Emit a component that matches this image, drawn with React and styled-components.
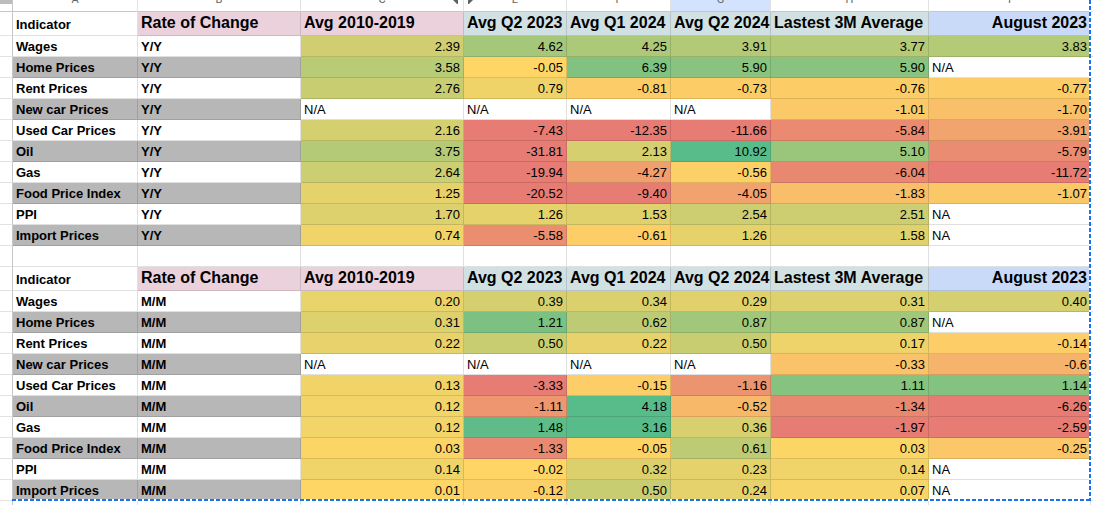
import React from "react";
import styled, { createGlobalStyle } from "styled-components";

const COLS = "13px 125px 163px 163px 103px 104px 100px 158px 162px 1fr";
const GRID = "rgba(0, 0, 0, 0.12)";
const GRAY = "#b7b7b7";
const PINK = "#ead1dc";
const TEAL = "#d0e0e3";
const BLUE = "#c9daf8";

const YELLOW = [255, 214, 102];
const RED = [230, 124, 115];
const GREEN = [87, 187, 138];

// sheets style 3-point colour scale, midpoint at 0
const scaleColor = (v, neg, pos) => {
    const t = v < 0 ? Math.max(-1, v / neg) : Math.min(1, v / pos);
    const end = t < 0 ? RED : GREEN;
    const a = Math.abs(t);
    const c = YELLOW.map((y, i) => Math.round(y + (end[i] - y) * a));
    return `rgb(${c.join(",")})`;
};

const topRows = [
    ["Wages", "Y/Y", ["2.39", "4.62", "4.25", "3.91", "3.77", "3.83"]],
    ["Home Prices", "Y/Y", ["3.58", "-0.05", "6.39", "5.90", "5.90", "N/A"]],
    ["Rent Prices", "Y/Y", ["2.76", "0.79", "-0.81", "-0.73", "-0.76", "-0.77"]],
    ["New car Prices", "Y/Y", ["N/A", "N/A", "N/A", "N/A", "-1.01", "-1.70"]],
    ["Used Car Prices", "Y/Y", ["2.16", "-7.43", "-12.35", "-11.66", "-5.84", "-3.91"]],
    ["Oil", "Y/Y", ["3.75", "-31.81", "2.13", "10.92", "5.10", "-5.79"]],
    ["Gas", "Y/Y", ["2.64", "-19.94", "-4.27", "-0.56", "-6.04", "-11.72"]],
    ["Food Price Index", "Y/Y", ["1.25", "-20.52", "-9.40", "-4.05", "-1.83", "-1.07"]],
    ["PPI", "Y/Y", ["1.70", "1.26", "1.53", "2.54", "2.51", "NA"]],
    ["Import Prices", "Y/Y", ["0.74", "-5.58", "-0.61", "1.26", "1.58", "NA"]],
];

const bottomRows = [
    ["Wages", "M/M", ["0.20", "0.39", "0.34", "0.29", "0.31", "0.40"]],
    ["Home Prices", "M/M", ["0.31", "1.21", "0.62", "0.87", "0.87", "N/A"]],
    ["Rent Prices", "M/M", ["0.22", "0.50", "0.22", "0.50", "0.17", "-0.14"]],
    ["New car Prices", "M/M", ["N/A", "N/A", "N/A", "N/A", "-0.33", "-0.6"]],
    ["Used Car Prices", "M/M", ["0.13", "-3.33", "-0.15", "-1.16", "1.11", "1.14"]],
    ["Oil", "M/M", ["0.12", "-1.11", "4.18", "-0.52", "-1.34", "-6.26"]],
    ["Gas", "M/M", ["0.12", "1.48", "3.16", "0.36", "-1.97", "-2.59"]],
    ["Food Price Index", "M/M", ["0.03", "-1.33", "-0.05", "0.61", "0.03", "-0.25"]],
    ["PPI", "M/M", ["0.14", "-0.02", "0.32", "0.23", "0.14", "NA"]],
    ["Import Prices", "M/M", ["0.01", "-0.12", "0.50", "0.24", "0.07", "NA"]],
];

const letters = [
    { l: "A" }, { l: "B" }, { l: "C" }, { l: "E" },
    { l: "F" }, { l: "G", active: true }, { l: "H" }, { l: "I" },
];

const GlobalStyle = createGlobalStyle`
    html, body {
        margin: 0;
        padding: 0;
        background: #fff;
        overflow: hidden;
    }
    body {
        font-family: "Liberation Sans", Arial, sans-serif;
    }
`;

const Sheet = styled.div`
    position: relative;
    display: flex;
    flex-direction: column;
    width: 1093px;
    height: 505px;
    overflow: hidden;
`;

const Row = styled.div`
    display: grid;
    grid-template-columns: ${COLS};
    height: ${({ $h }) => $h}px;
    flex-shrink: 0;
`;

const Cell = styled.div`
    box-sizing: border-box;
    display: flex;
    align-items: flex-end;
    justify-content: ${({ $right }) => ($right ? "flex-end" : "flex-start")};
    padding: 0 3px ${({ $head }) => ($head ? 3 : 2)}px;
    background: ${({ $bg }) => $bg || "#fff"};
    border-right: 1px solid ${GRID};
    border-bottom: 1px solid ${GRID};
    font-size: 13px;
    font-weight: ${({ $bold }) => ($bold ? 700 : 400)};
    line-height: 15px;
    color: #000;
    white-space: nowrap;
    overflow: hidden;
`;

const HeadCell = styled(Cell)`
    font-size: 16px;
    font-weight: 700;
    line-height: 18px;
`;

const RowHead = styled.div`
    box-sizing: border-box;
    background: #fff;
    border-right: 1px solid #c4c7c5;
    border-bottom: 1px solid #e1e3e1;
`;

const Spare = styled.div`
    box-sizing: border-box;
    background: #fff;
    border-bottom: 1px solid ${GRID};
`;

const Corner = styled.div`
    box-sizing: border-box;
    background: linear-gradient(#bdbdbd 0 4px, #fff 4px);
    border-right: 1px solid #c4c7c5;
    border-bottom: 1px solid #c4c7c5;
`;

// the column letters are scrolled mostly out of view, only their feet show
const Letter = styled.div`
    box-sizing: border-box;
    background: ${({ $active }) => ($active ? "#d3e3fd" : "#fff")};
    border-right: 1px solid #e1e3e1;
    border-bottom: 1px solid #c4c7c5;
    font-family: Roboto, "Liberation Sans", sans-serif;
    font-size: 11px;
    line-height: 11px;
    color: #5f6368;
    text-align: center;
    overflow: hidden;

    span {
        display: block;
        margin-top: -6px;
    }
`;

const StripRow = styled(Row)`
    position: relative;
    overflow: hidden;
`;

const HiddenMark = styled.svg`
    position: absolute;
    left: 452px;
    top: 0;
`;

const Selection = styled.div`
    position: absolute;
    left: 12px;
    top: 0;
    width: 1079px;
    height: 501px;
    pointer-events: none;
    background:
        repeating-linear-gradient(to bottom, #1a73e8 0 4px, #fff 4px 6px) right top / 2px 100% no-repeat,
        repeating-linear-gradient(to right, #1a73e8 0 4px, #fff 4px 6px) left bottom / 100% 2px no-repeat;
`;

function ColumnStrip() {
    return (
        <StripRow $h={12}>
            <Corner />
            {letters.map(c => (
                <Letter key={c.l} $active={c.active}>
                    <span>{c.l}</span>
                </Letter>
            ))}
            <Spare />
            <HiddenMark width="22" height="4" viewBox="0 0 22 4">
                <polygon points="1,0 6,-5 6,5" fill="#5f6368" />
                <polygon points="21,0 16,-5 16,5" fill="#5f6368" />
            </HiddenMark>
        </StripRow>
    );
}

function HeaderRow() {
    return (
        <Row $h={24}>
            <RowHead />
            <Cell $head $bold>Indicator</Cell>
            <HeadCell $head $bg={PINK}>Rate of Change</HeadCell>
            <HeadCell $head $bg={PINK}>Avg 2010-2019</HeadCell>
            <HeadCell $head $bg={TEAL}>Avg Q2 2023</HeadCell>
            <HeadCell $head $bg={TEAL}>Avg Q1 2024</HeadCell>
            <HeadCell $head $bg={TEAL}>Avg Q2 2024</HeadCell>
            <HeadCell $head $bg={TEAL}>Lastest 3M Average</HeadCell>
            <HeadCell $head $bg={BLUE} $right>August 2023</HeadCell>
            <Spare />
        </Row>
    );
}

function DataRow({ row, shaded, neg, pos }) {
    const [name, rate, values] = row;
    const bg = shaded ? GRAY : undefined;
    return (
        <Row $h={21}>
            <RowHead />
            <Cell $bold $bg={bg}>{name}</Cell>
            <Cell $bold $bg={bg}>{rate}</Cell>
            {values.map((v, i) => {
                const num = parseFloat(v);
                if (isNaN(num)) return <Cell key={i}>{v}</Cell>;
                return (
                    <Cell key={i} $right $bg={scaleColor(num, neg, pos)}>
                        {v}
                    </Cell>
                );
            })}
            <Spare />
        </Row>
    );
}

function EmptyRow({ h }) {
    return (
        <Row $h={h}>
            <RowHead />
            {Array.from({ length: 8 }).map((_, i) => <Cell key={i} />)}
            <Spare />
        </Row>
    );
}

function Table({ rows, neg, pos }) {
    return (
        <>
            <HeaderRow />
            {rows.map((r, i) => (
                <DataRow key={r[0]} row={r} shaded={i % 2 === 1} neg={neg} pos={pos} />
            ))}
        </>
    );
}

export default function App() {
    return (
        <>
            <GlobalStyle />
            <Sheet>
                <ColumnStrip />
                <Table rows={topRows} neg={7} pos={8.5} />
                <EmptyRow h={21} />
                <Table rows={bottomRows} neg={1.55} pos={1.55} />
                <EmptyRow h={21} />
                <Selection />
            </Sheet>
        </>
    );
}
